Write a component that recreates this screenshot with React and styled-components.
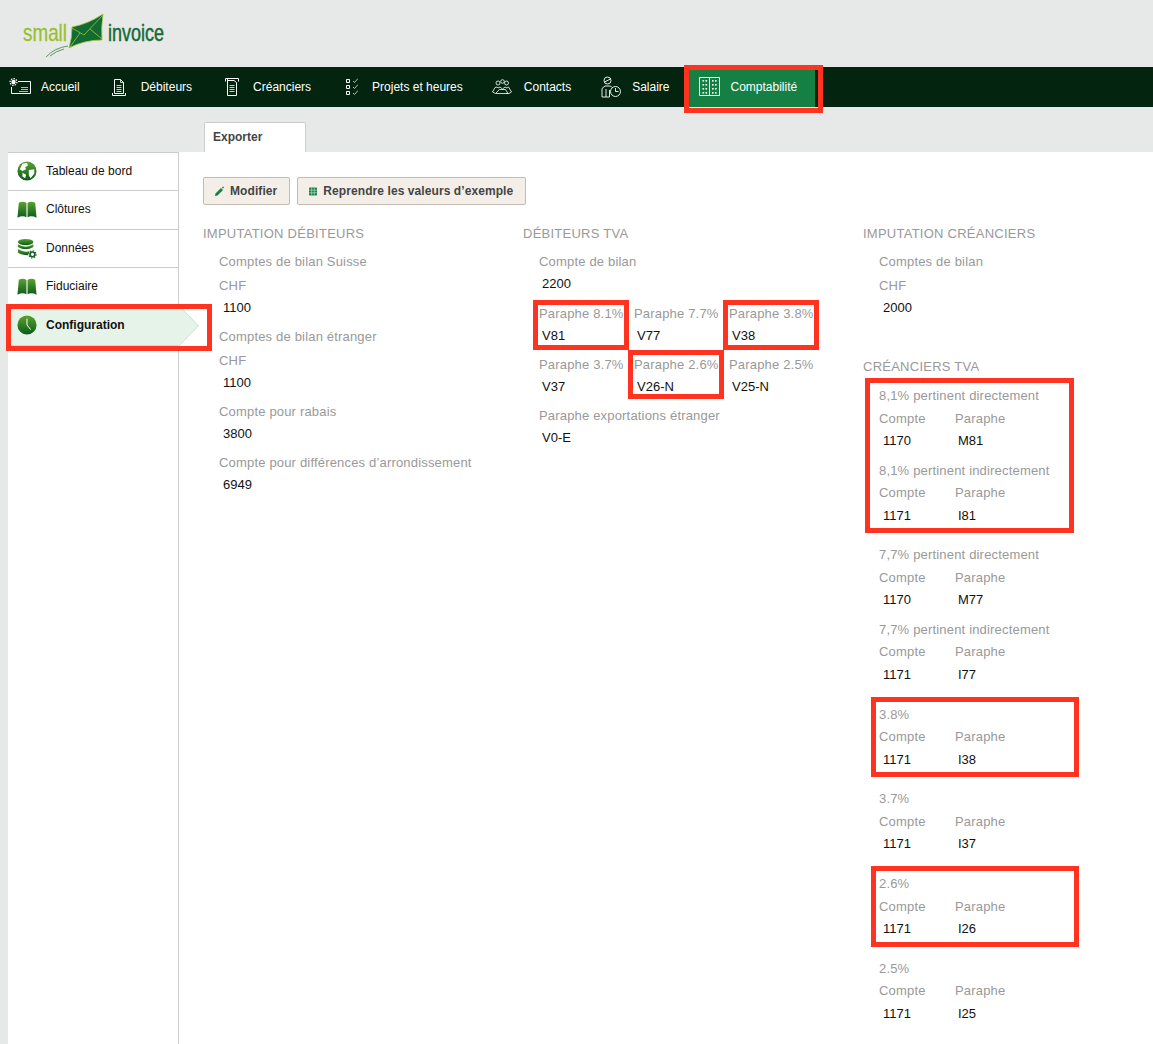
import React from 'react'
import styled, { createGlobalStyle, css } from 'styled-components'

const GlobalStyle = createGlobalStyle`
  html, body {
    margin: 0;
    padding: 0;
    background: #e7e9e8;
    font-family: "Liberation Sans", Arial, sans-serif;
    font-size: 13px;
    color: #111;
  }
  * { box-sizing: border-box; }
`

const redBox = css`
  content: '';
  position: absolute;
  top: ${(p) => p.$t}px;
  right: ${(p) => p.$r}px;
  bottom: ${(p) => p.$b}px;
  left: ${(p) => p.$l}px;
  border: 5px solid #ff3320;
  pointer-events: none;
`

const Page = styled.div`
  min-height: 100vh;
  display: flex;
  flex-direction: column;
`

const Header = styled.header`
  height: 67px;
  padding: 13px 0 0 22px;
`

const Nav = styled.nav`
  height: 40px;
  background: #032510;
  padding-left: 9px;
  display: flex;
  gap: 32px;
`

const NavItem = styled.a`
  position: relative;
  display: flex;
  align-items: center;
  gap: ${(p) => p.$gap}px;
  margin-left: ${(p) => p.$ml || 0}px;
  color: #fff;
  font-size: 12px;
  white-space: nowrap;
  ${(p) =>
    p.$active &&
    css`
      background: #148044;
      padding: 0 18px 0 10px;
      &::after {
        ${redBox}
      }
    `}
`

const TabBar = styled.div`
  height: 45px;
  padding: 15px 0 0 204px;
`

const Tab = styled.div`
  width: 102px;
  height: 30px;
  background: #fff;
  border: 1px solid #ccc;
  border-bottom: 0;
  border-radius: 2px 2px 0 0;
  padding-left: 8px;
  line-height: 28px;
  font-size: 12px;
  font-weight: bold;
  color: #444;
`

const Body = styled.div`
  flex: 1;
  display: flex;
  padding-left: 8px;
`

const Sidebar = styled.aside`
  width: 171px;
  flex: none;
  background: #fff;
  border-top: 1px solid #ccc;
  border-right: 1px solid #ccc;
`

const SideItem = styled.a`
  position: relative;
  height: 38.3px;
  display: flex;
  align-items: center;
  gap: 9px;
  padding: 0 0 1px 9px;
  font-size: 12px;
  color: #111;
  border-bottom: 1px solid #ccc;
  ${(p) =>
    p.$active &&
    css`
      height: 40px;
      background: #e6f3e8;
      font-weight: bold;
      margin-right: -1px;
      border-bottom-color: #d5d8d5;
      &::before {
        content: '';
        position: absolute;
        left: 100%;
        top: -1px;
        width: 20px;
        height: 41px;
        background: #d5d8d5;
        clip-path: polygon(0 0, 100% 50%, 0 100%);
      }
      &::after {
        ${redBox}
      }
    `}
`

const SideArrow = styled.span`
  position: absolute;
  left: 100%;
  top: 0;
  width: 19px;
  height: 39px;
  background: #e6f3e8;
  clip-path: polygon(0 0, 100% 50%, 0 100%);
`

const Main = styled.main`
  flex: 1;
  background: #fff;
  padding: 25px 0 0 24px;
`

const Toolbar = styled.div`
  display: flex;
  gap: 7px;
  margin-bottom: 18px;
`

const Button = styled.button`
  height: 28px;
  display: flex;
  align-items: center;
  gap: 5px;
  padding: 0 12px 0 10px;
  background: #f3efe8;
  border: 1px solid #c4bbae;
  border-radius: 2px;
  font-family: inherit;
  font-size: 12px;
  font-weight: bold;
  letter-spacing: 0.08px;
  color: #444;
`

const Columns = styled.div`
  display: grid;
  grid-template-columns: 320px 340px 1fr;
`

const Heading = styled.h3`
  margin: 0;
  font-size: 13px;
  font-weight: normal;
  line-height: 22px;
  letter-spacing: 0.25px;
  color: #999;
  text-transform: uppercase;
`

const Indent = styled.div`
  padding: 5px 0 0 16px;
`

const Field = styled.div`
  margin-bottom: ${(p) => p.$mb ?? 6}px;
`

const Label = styled.div`
  line-height: 24px;
  color: #999;
  letter-spacing: 0.18px;
  white-space: nowrap;
`

const Value = styled.div`
  line-height: 19px;
  padding-bottom: 2px;
  padding-left: ${(p) => p.$pad ?? 4}px;
  color: #111;
`

const ParapheGrid = styled.div`
  display: grid;
  grid-template-columns: repeat(3, 95px);
`

const Marked = styled.div`
  position: relative;
  &::after {
    ${redBox}
  }
`

const VatList = styled.div`
  padding: 6px 0 0 16px;
`

const VatGroup = styled.div`
  position: relative;
  width: 176px;
  margin-bottom: 10.25px;
  ${(p) =>
    p.$marked &&
    css`
      &::after {
        ${redBox}
      }
    `}
`

const VatEntry = styled.div`
  padding-bottom: 6.5px;
`

const VatTitle = styled.div`
  line-height: 23.5px;
  color: #999;
  letter-spacing: 0.18px;
`

const VatRow = styled.div`
  display: grid;
  grid-template-columns: 76px 76px;
`

const VatLabel = styled.div`
  line-height: 22.5px;
  color: #999;
  letter-spacing: 0.18px;
`

const VatValue = styled.div`
  line-height: 22px;
  padding-left: ${(p) => p.$pad}px;
`

const ColumnSpacer = styled.div`
  height: 37px;
`

const Logo = () => (
  <svg width="180" height="48" viewBox="22 13 180 48">
    <text x="23" y="41" fontFamily="Liberation Sans" fontSize="24" fill="#9abf2c" stroke="#9abf2c" strokeWidth="0.3" textLength="44" lengthAdjust="spacingAndGlyphs">small</text>
    <text x="108" y="41" fontFamily="Liberation Sans" fontSize="24" fill="#156a36" stroke="#156a36" strokeWidth="0.5" textLength="56" lengthAdjust="spacingAndGlyphs">invoice</text>
    <path d="M72 27 Q88 24 103 14 Q101 28 102 40 Q84 40 69 48 Q72 38 72 27Z" fill="#116b33" stroke="#a5c63a" strokeWidth="0.8" />
    <path d="M72 28 L84 35 L103 15 M70 47 L80 33 M102 39 L90 29" fill="none" stroke="#a5c63a" strokeWidth="0.8" />
    <path d="M46 57 Q54 48 68 46 M50 56 Q56 51 64 49" fill="none" stroke="#5d9a5a" strokeWidth="1" />
  </svg>
)

const NavSvg = ({ w, children }) => (
  <svg width={w} height="24" viewBox={`0 0 ${w} 24`} fill="none" stroke="#fff" strokeWidth="1" style={{ flex: 'none' }}>
    {children}
  </svg>
)

const HomeIcon = () => (
  <NavSvg w={22}>
    <path d="M9 6.5H21.5V18.5H2.5V12" />
    <path d="M12 12.5H19M12 14.5H19M10 16.5H19" strokeWidth="0.7" />
    <circle cx="4.5" cy="7" r="2.2" fill="#fff" stroke="none" />
    <circle cx="4.5" cy="7" r="3.4" strokeDasharray="1.4 1.2" strokeWidth="1.3" />
  </NavSvg>
)

const DebtorIcon = () => (
  <NavSvg w={14}>
    <path d="M2.5 4.5H8.5L11.5 7.5V18.5H2.5Z" />
    <path d="M8.5 4.5V7.5H11.5M4.5 10.5H9.5M4.5 12.5H9.5M4.5 14.5H9.5M4.5 16.5H9.5" strokeWidth="0.8" />
    <path d="M0.5 18V20.5H13.5V18" />
  </NavSvg>
)

const CreditorIcon = () => (
  <NavSvg w={14}>
    <path d="M0.5 6.5V3.5H13.5V6.5" />
    <path d="M2.5 3.5V20.5H11.5V7.5L9 5.5H2.5" />
    <path d="M4.5 10.5H9.5M4.5 12.5H9.5M4.5 14.5H9.5M4.5 16.5H9.5" strokeWidth="0.8" />
  </NavSvg>
)

const ProjectIcon = () => (
  <NavSvg w={13}>
    <path d="M1.5 4.5H4.5V7.5H1.5ZM1.5 10.5H4.5V13.5H1.5ZM1.5 16.5H4.5V19.5H1.5Z" />
    <path d="M8 6L9.5 7.5L13 3.5M8 12L9.5 13.5L13 9.5M8 18L9.5 19.5L13 15.5" strokeWidth="0.7" />
  </NavSvg>
)

const ContactsIcon = () => (
  <NavSvg w={20}>
    <circle cx="6" cy="8" r="2" strokeWidth="0.8" />
    <circle cx="10.5" cy="6.5" r="1.8" strokeWidth="0.8" />
    <circle cx="14.5" cy="8" r="2" strokeWidth="0.8" />
    <path d="M0.5 17L3 12.5L5 12L6 13L8 12L10.5 14L13 12L15 13L16.5 12L19.5 17L17 18.5H14M0.5 17L3.5 18.5H16L13.5 14.5H7.5L4 18" strokeWidth="0.8" />
  </NavSvg>
)

const SalaryIcon = () => (
  <NavSvg w={20}>
    <circle cx="6.5" cy="5.5" r="3.5" strokeWidth="0.9" />
    <path d="M3.5 7L9.5 4" strokeWidth="0.9" />
    <path d="M1 22V13.5L4 11H9.5L11 12.5M1 22H8.5M5 22V14M8.5 22V15" strokeWidth="0.9" />
    <circle cx="14.5" cy="16.5" r="5" strokeWidth="0.9" />
    <path d="M14.5 13V16.5H17.5" strokeWidth="0.9" />
  </NavSvg>
)

const AccountingIcon = () => (
  <NavSvg w={21}>
    <path d="M0.5 2.5H20.5V20.5H0.5Z" />
    <path d="M10.5 2.5V20.5" />
    <g fill="#fff" stroke="none">
      {[5, 9, 13, 17].map((y) => (
        <React.Fragment key={y}>
          <rect x="3.5" y={y} width="1.6" height="1.6" />
          <rect x="6.5" y={y} width="1.6" height="1.6" />
          <rect x="13" y={y} width="1.6" height="1.6" />
          <rect x="16" y={y} width="1.6" height="1.6" />
        </React.Fragment>
      ))}
    </g>
  </NavSvg>
)

const SideSvg = ({ id, children }) => (
  <svg width="20" height="22" viewBox="0 0 22 24" style={{ flex: 'none' }}>
    <defs>
      <linearGradient id={id} x1="0" y1="0" x2="0" y2="1">
        <stop offset="0" stopColor="#58a32c" />
        <stop offset="1" stopColor="#0d5a1e" />
      </linearGradient>
    </defs>
    {children}
  </svg>
)

const GlobeIcon = () => (
  <SideSvg id="globe">
    <circle cx="11" cy="12" r="10.5" fill="url(#globe)" />
    <path d="M6 4L11 3L12 6L9 8L10 10L6 12L3 10ZM13 11L19 10L19 15L15 20L13 17ZM6 14L10 16L9 20L6 18Z" fill="#fff" />
  </SideSvg>
)

const BookIcon = ({ id }) => (
  <SideSvg id={id}>
    <path d="M2 5Q7 3 10.4 5.5V21Q6 19 0.5 21.5ZM11.6 5.5Q15 3 20 5L21.5 21.5Q16 19 11.6 21Z" fill={`url(#${id})`} />
  </SideSvg>
)

const DatabaseIcon = () => (
  <SideSvg id="db">
    <ellipse cx="9.5" cy="5.5" rx="8.5" ry="3.5" fill="url(#db)" />
    <path d="M1 8Q9.5 13 18 8V11Q9.5 16 1 11Z" fill="url(#db)" />
    <path d="M1 13Q9.5 18 14 15L12 20Q5 20 1 17Z" fill="url(#db)" />
    <circle cx="17" cy="19" r="2.6" fill="none" stroke="#1e5a2a" strokeWidth="1.8" />
    <circle cx="17" cy="19" r="4" fill="none" stroke="#1e5a2a" strokeWidth="1.2" strokeDasharray="1.6 1.5" />
  </SideSvg>
)

const ClockIcon = () => (
  <SideSvg id="clock">
    <circle cx="11" cy="12" r="10.5" fill="url(#clock)" />
    <path d="M11 5V12L15 17" fill="none" stroke="#fff" strokeWidth="1.1" />
  </SideSvg>
)

const PenIcon = () => (
  <svg width="11" height="11" viewBox="0 0 11 11">
    <path d="M1 10L1.5 7.5L7 2L9 4L3.5 9.5Z" fill="#148044" />
    <path d="M9 0.5V2.5M8 1.5H10" stroke="#148044" strokeWidth="0.7" />
  </svg>
)

const TableIcon = () => (
  <svg width="10" height="9" viewBox="-0.5 0 10 9">
    <rect x="0.5" y="0.5" width="8" height="8" rx="1" fill="#148044" />
    <path d="M0.5 3.2H8.5M0.5 5.8H8.5M3.2 0.5V8.5M5.8 0.5V8.5" stroke="#cfe8d6" strokeWidth="0.6" />
  </svg>
)

const navItems = [
  { label: 'Accueil', icon: <HomeIcon />, gap: 10 },
  { label: 'Débiteurs', icon: <DebtorIcon />, gap: 15 },
  { label: 'Créanciers', icon: <CreditorIcon />, gap: 14, ml: 1 },
  { label: 'Projets et heures', icon: <ProjectIcon />, gap: 14, ml: 2 },
  { label: 'Contacts', icon: <ContactsIcon />, gap: 12, ml: -3 },
  { label: 'Salaire', icon: <SalaryIcon />, gap: 11, ml: -2 },
]

const sideItems = [
  { label: 'Tableau de bord', icon: <GlobeIcon /> },
  { label: 'Clôtures', icon: <BookIcon id="book1" /> },
  { label: 'Données', icon: <DatabaseIcon /> },
  { label: 'Fiduciaire', icon: <BookIcon id="book2" /> },
]

const VatBlock = ({ title, account, code }) => (
  <VatEntry>
    <VatTitle>{title}</VatTitle>
    <VatRow>
      <VatLabel>Compte</VatLabel>
      <VatLabel>Paraphe</VatLabel>
      <VatValue $pad={4}>{account}</VatValue>
      <VatValue $pad={3}>{code}</VatValue>
    </VatRow>
  </VatEntry>
)

const App = () => (
  <Page>
    <GlobalStyle />
    <Header>
      <Logo />
    </Header>
    <Nav>
      {navItems.map((item) => (
        <NavItem key={item.label} $gap={item.gap} $ml={item.ml}>
          {item.icon}
          {item.label}
        </NavItem>
      ))}
      <NavItem $active $gap={11} $ml={-13} $t={-2} $r={-8} $b={-6} $l={-5}>
        <AccountingIcon />
        Comptabilité
      </NavItem>
    </Nav>
    <TabBar>
      <Tab>Exporter</Tab>
    </TabBar>
    <Body>
      <Sidebar>
        {sideItems.map((item) => (
          <SideItem key={item.label}>
            {item.icon}
            {item.label}
          </SideItem>
        ))}
        <SideItem $active $t={-2} $r={-33} $b={-6} $l={-2}>
          <SideArrow />
          <ClockIcon />
          Configuration
        </SideItem>
      </Sidebar>
      <Main>
        <Toolbar>
          <Button>
            <PenIcon />
            Modifier
          </Button>
          <Button>
            <TableIcon />
            Reprendre les valeurs d’exemple
          </Button>
        </Toolbar>
        <Columns>
          <div>
            <Heading>Imputation débiteurs</Heading>
            <Indent>
              <Field>
                <Label>Comptes de bilan Suisse</Label>
                <Label>CHF</Label>
                <Value>1100</Value>
              </Field>
              <Field>
                <Label>Comptes de bilan étranger</Label>
                <Label>CHF</Label>
                <Value>1100</Value>
              </Field>
              <Field>
                <Label>Compte pour rabais</Label>
                <Value>3800</Value>
              </Field>
              <Field>
                <Label>Compte pour différences d’arrondissement</Label>
                <Value>6949</Value>
              </Field>
            </Indent>
          </div>
          <div>
            <Heading>Débiteurs TVA</Heading>
            <Indent>
              <Field $mb={7}>
                <Label>Compte de bilan</Label>
                <Value $pad={3}>2200</Value>
              </Field>
              <ParapheGrid>
                <Marked $t={-2} $r={5} $b={3} $l={-6}>
                  <Label>Paraphe 8.1%</Label>
                  <Value $pad={3}>V81</Value>
                </Marked>
                <Field>
                  <Label>Paraphe 7.7%</Label>
                  <Value $pad={3}>V77</Value>
                </Field>
                <Marked $t={-2} $r={5} $b={3} $l={-6}>
                  <Label>Paraphe 3.8%</Label>
                  <Value $pad={3}>V38</Value>
                </Marked>
                <Field>
                  <Label>Paraphe 3.7%</Label>
                  <Value $pad={3}>V37</Value>
                </Field>
                <Marked $t={-3} $r={5} $b={5} $l={-6}>
                  <Label>Paraphe 2.6%</Label>
                  <Value $pad={3}>V26-N</Value>
                </Marked>
                <Field>
                  <Label>Paraphe 2.5%</Label>
                  <Value $pad={3}>V25-N</Value>
                </Field>
              </ParapheGrid>
              <Field>
                <Label>Paraphe exportations étranger</Label>
                <Value $pad={3}>V0-E</Value>
              </Field>
            </Indent>
          </div>
          <div>
            <Heading>Imputation créanciers</Heading>
            <Indent>
              <Label>Comptes de bilan</Label>
              <Label>CHF</Label>
              <Value>2000</Value>
            </Indent>
            <ColumnSpacer />
            <Heading>Créanciers TVA</Heading>
            <VatList>
              <VatGroup $marked $t={-6} $r={-19} $b={0} $l={-14}>
                <VatBlock title="8,1% pertinent directement" account="1170" code="M81" />
                <VatBlock title="8,1% pertinent indirectement" account="1171" code="I81" />
              </VatGroup>
              <VatGroup>
                <VatBlock title="7,7% pertinent directement" account="1170" code="M77" />
                <VatBlock title="7,7% pertinent indirectement" account="1171" code="I77" />
              </VatGroup>
              <VatGroup $marked $t={-6} $r={-24} $b={0} $l={-8}>
                <VatBlock title="3.8%" account="1171" code="I38" />
              </VatGroup>
              <VatGroup>
                <VatBlock title="3.7%" account="1171" code="I37" />
              </VatGroup>
              <VatGroup $marked $t={-6} $r={-24} $b={0} $l={-8}>
                <VatBlock title="2.6%" account="1171" code="I26" />
              </VatGroup>
              <VatGroup>
                <VatBlock title="2.5%" account="1171" code="I25" />
              </VatGroup>
            </VatList>
          </div>
        </Columns>
      </Main>
    </Body>
  </Page>
)

export default App
